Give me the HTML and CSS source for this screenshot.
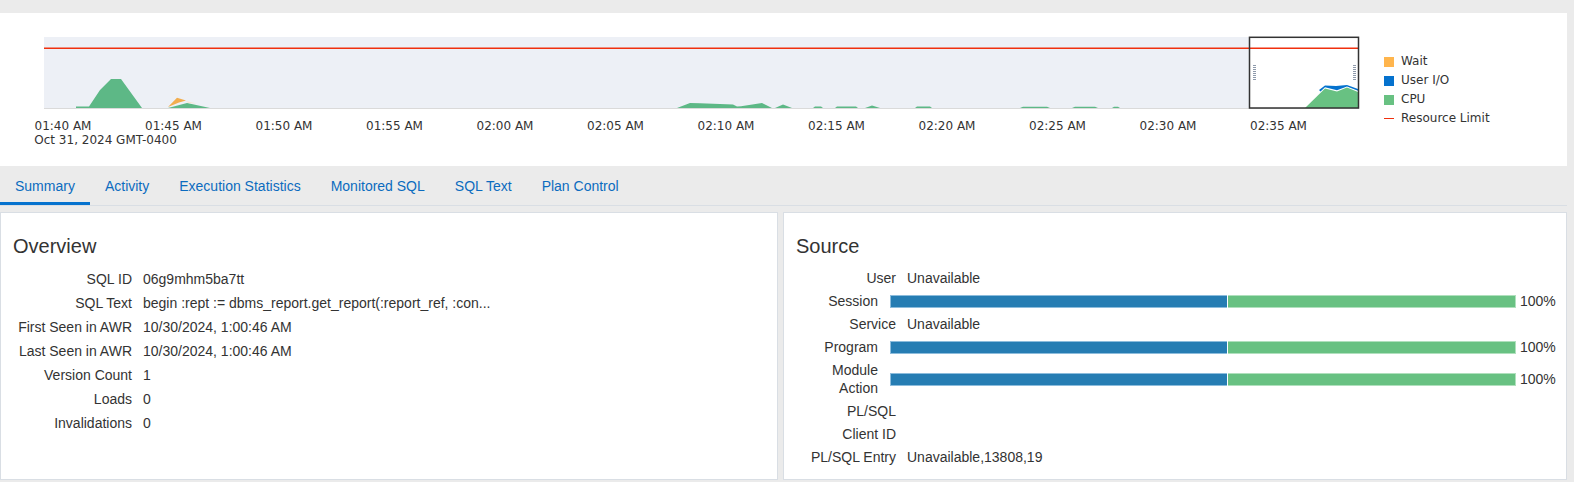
FILE: index.html
```html
<!DOCTYPE html>
<html lang="en">
<head>
<meta charset="utf-8">
<title>SQL Details</title>
<link rel="stylesheet" href="styles.css">
</head>
<body>
<div class="page">
  <section class="chart-panel">
    <svg class="chart" width="1370" height="153" viewBox="0 0 1370 153">
      <rect x="44" y="24" width="1205" height="71" fill="#edf0f6"/>
      <rect x="1249" y="24" width="110" height="71" fill="#ffffff"/>
      <g fill="#5db886">
        <path d="M76,95 L76,93.6 L89,93.6 L100,77 L111,66 L121,66 L142,95 Z"/>
        <path d="M168,95 L187,90 L210,95 Z"/>
        <path d="M677,95 L690,90 L700,90.3 L733,91.5 L737,93.6 L741,93.2 L762,90 L772,95 Z"/>
        <path d="M775,95 L783,91.5 L792,95 Z"/>
        <path d="M813,95 L815,93.6 L821,93.6 L823,95 Z"/>
        <path d="M835,95 L837,93.6 L856,93.6 L858,95 Z"/>
        <path d="M865,95 L872,92.5 L880,95 Z"/>
        <path d="M915,95 L917,93.6 L930,93.6 L932,95 Z"/>
        <path d="M1020,95 L1023,93.7 L1047,93.7 L1050,95 Z"/>
        <path d="M1072,95 L1075,93.7 L1095,93.7 L1098,95 Z"/>
        <path d="M1112,95 L1114,93.7 L1118,93.7 L1120,95 Z"/>
      </g>
      <path d="M168,94 L177,84.7 L186,87.6 L179,89.6 Z" fill="#f2ad4e"/>
      <path d="M186,88 L197,90.5 L188,90 Z" fill="#f6e7d2"/>
      <path d="M1305,95 L1325,75.5 L1337,78.5 L1347,74.5 L1358,79 L1358,95 Z" fill="#68c182"/>
      <path d="M1319,77 L1325,72.5 L1336,73 L1347,72 L1358,76 L1358,77.8 L1347,73.4 L1337,77.3 L1325,74.3 L1320.5,78.6 Z" fill="#0572ce"/>
      <line x1="44" y1="95.5" x2="1359" y2="95.5" stroke="#dadada" stroke-width="1"/>
      <line x1="44" y1="35.3" x2="1359" y2="35.3" stroke="#f0300e" stroke-width="1.4"/>
      <line x1="1254.5" y1="52" x2="1254.5" y2="67" stroke="#8e9aab" stroke-width="3" stroke-dasharray="1 1"/>
      <line x1="1354.5" y1="52" x2="1354.5" y2="67" stroke="#8e9aab" stroke-width="3" stroke-dasharray="1 1"/>
      <rect x="1249.5" y="24.3" width="109" height="70.7" fill="none" stroke="#333333" stroke-width="1.5"/>
      <g class="ticks" text-anchor="middle">
        <text x="63" y="117">01:40 AM</text>
        <text x="173.5" y="117">01:45 AM</text>
        <text x="284" y="117">01:50 AM</text>
        <text x="394.5" y="117">01:55 AM</text>
        <text x="505" y="117">02:00 AM</text>
        <text x="615.5" y="117">02:05 AM</text>
        <text x="726" y="117">02:10 AM</text>
        <text x="836.5" y="117">02:15 AM</text>
        <text x="947" y="117">02:20 AM</text>
        <text x="1057.5" y="117">02:25 AM</text>
        <text x="1168" y="117">02:30 AM</text>
        <text x="1278.5" y="117">02:35 AM</text>
      </g>
      <text class="ticks" x="34.3" y="131">Oct 31, 2024 GMT-0400</text>
    </svg>
    <ul class="legend">
      <li><span class="swatch wait"></span>Wait</li>
      <li><span class="swatch io"></span>User I/O</li>
      <li><span class="swatch cpu"></span>CPU</li>
      <li><span class="swatch limit"></span>Resource Limit</li>
    </ul>
  </section>

  <nav class="tabs">
    <a class="tab active">Summary</a>
    <a class="tab">Activity</a>
    <a class="tab">Execution Statistics</a>
    <a class="tab">Monitored SQL</a>
    <a class="tab">SQL Text</a>
    <a class="tab">Plan Control</a>
  </nav>

  <div class="panels">
    <section class="card">
      <h2 class="card-title">Overview</h2>
      <div class="rows ov">
        <div class="row"><span class="label">SQL ID</span><span class="value">06g9mhm5ba7tt</span></div>
        <div class="row"><span class="label">SQL Text</span><span class="value">begin :rept := dbms_report.get_report(:report_ref, :con...</span></div>
        <div class="row"><span class="label">First Seen in AWR</span><span class="value">10/30/2024, 1:00:46 AM</span></div>
        <div class="row"><span class="label">Last Seen in AWR</span><span class="value">10/30/2024, 1:00:46 AM</span></div>
        <div class="row"><span class="label">Version Count</span><span class="value">1</span></div>
        <div class="row"><span class="label">Loads</span><span class="value">0</span></div>
        <div class="row"><span class="label">Invalidations</span><span class="value">0</span></div>
      </div>
    </section>
    <section class="card">
      <h2 class="card-title">Source</h2>
      <div class="rows src">
        <div class="row"><span class="label">User</span><span class="value">Unavailable</span></div>
        <div class="row bar-row"><span class="label">Session</span><span class="bar"><span class="seg blue" style="width:337px"></span><span class="seg green" style="width:288px"></span></span><span class="pct">100%</span></div>
        <div class="row"><span class="label">Service</span><span class="value">Unavailable</span></div>
        <div class="row bar-row"><span class="label">Program</span><span class="bar"><span class="seg blue" style="width:337px"></span><span class="seg green" style="width:288px"></span></span><span class="pct">100%</span></div>
        <div class="row bar-row"><span class="label">Module<br>Action</span><span class="bar"><span class="seg blue" style="width:337px"></span><span class="seg green" style="width:288px"></span></span><span class="pct">100%</span></div>
        <div class="row"><span class="label">PL/SQL</span><span class="value"></span></div>
        <div class="row"><span class="label">Client ID</span><span class="value"></span></div>
        <div class="row"><span class="label">PL/SQL Entry</span><span class="value">Unavailable,13808,19</span></div>
      </div>
    </section>
  </div>
</div>
</body>
</html>
```

FILE: styles.css
```css
html, body {
  margin: 0;
  padding: 0;
}

body {
  background: #ebebeb;
  font-family: "Liberation Sans", Arial, sans-serif;
  color: #333333;
  width: 1574px;
  height: 482px;
  overflow: hidden;
}

.page {
  width: 1567px;
  padding-top: 13px;
}

/* ---------- chart ---------- */
.chart-panel {
  background: #ffffff;
  height: 153px;
  display: flex;
}

.chart {
  display: block;
  flex: none;
}

.ticks {
  font-family: "DejaVu Sans", sans-serif;
  font-size: 12px;
  fill: #333333;
}

.legend {
  list-style: none;
  margin: 0;
  padding: 39px 0 0 14px;
  font-family: "DejaVu Sans", sans-serif;
  font-size: 12px;
  color: #333333;
}

.legend li {
  display: flex;
  align-items: center;
  gap: 7px;
  line-height: 19px;
  height: 19px;
}

.swatch {
  display: inline-block;
  width: 10px;
  height: 10px;
}

.swatch.wait { background: #ffb54d; }
.swatch.io { background: #0572ce; }
.swatch.cpu { background: #68c182; }
.swatch.limit {
  height: 1.5px;
  background: #f0300e;
}

/* ---------- tabs ---------- */
.tabs {
  display: flex;
  height: 39px;
  border-bottom: 1px solid #d9dee4;
}

.tab {
  padding: 4px 15px 0;
  line-height: 32px;
  font-size: 14px;
  color: #0b6bbf;
  border-bottom: 3px solid transparent;
  cursor: pointer;
}

.tab.active {
  border-bottom-color: #0572ce;
}

/* ---------- panels ---------- */
.panels {
  display: grid;
  grid-template-columns: 778px 784px;
  column-gap: 5px;
  margin-top: 6px;
  height: 268px;
}

.card {
  background: #ffffff;
  border: 1px solid #d9dee4;
  padding: 21px 12px 8px;
}

.card-title {
  margin: 0 0 9px;
  font-size: 20px;
  line-height: 24px;
  font-weight: normal;
  color: #333333;
}

.rows {
  font-size: 14px;
}

.row {
  display: flex;
  align-items: center;
}

.label {
  flex: none;
  text-align: right;
  color: #333333;
}

.value {
  color: #333333;
  white-space: nowrap;
}

.ov .row {
  line-height: 18px;
  padding: 3px 0;
}

.ov .label {
  width: 119px;
  margin-right: 11px;
}

.src .row {
  line-height: 17px;
  padding: 3px 0;
}

.src .bar-row:nth-child(5) {
  line-height: 17.6px;
}

.src .label {
  width: 100px;
  margin-right: 11px;
}

.src .bar-row .label {
  width: 82px;
  margin-right: 12px;
}

.bar {
  display: flex;
  gap: 1px;
  height: 13px;
}

.seg {
  display: block;
  height: 13px;
  box-sizing: border-box;
}

.seg.blue {
  background: #267db3;
  border: 1px solid #8cbcdc;
  border-right: none;
}

.seg.green {
  background: #68c182;
  border: 1px solid #b0e0bd;
  border-left: none;
}

.pct {
  margin-left: 4px;
  color: #333333;
}
```
